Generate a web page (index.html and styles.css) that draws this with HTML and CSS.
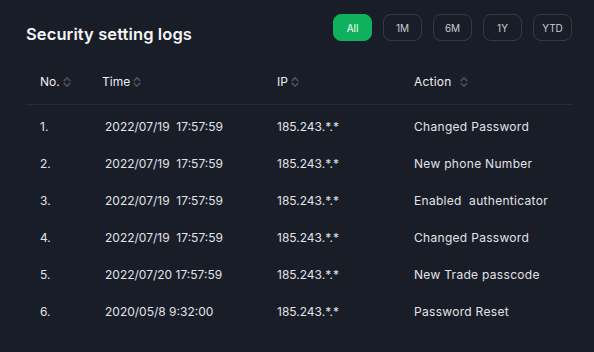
FILE: index.html
```html
<!DOCTYPE html>
<html>
<head>
<meta charset="utf-8">
<link rel="stylesheet" href="styles.css">
</head>
<body>
<div class="card">
  <div class="top">
    <h1 class="title">Security setting logs</h1>
    <div class="filters">
      <button class="chip active">All</button>
      <button class="chip">1M</button>
      <button class="chip">6M</button>
      <button class="chip">1Y</button>
      <button class="chip">YTD</button>
    </div>
  </div>
  <div class="table">
    <div class="row head">
      <div class="c1">No. <svg class="sort" viewBox="0 0 8 12"><path d="M1.2 4.6 4 1.8 6.8 4.6M1.2 7.4 4 10.2 6.8 7.4"/></svg></div>
      <div class="c2">Time <svg class="sort" viewBox="0 0 8 12"><path d="M1.2 4.6 4 1.8 6.8 4.6M1.2 7.4 4 10.2 6.8 7.4"/></svg></div>
      <div class="c3">IP <svg class="sort" viewBox="0 0 8 12"><path d="M1.2 4.6 4 1.8 6.8 4.6M1.2 7.4 4 10.2 6.8 7.4"/></svg></div>
      <div class="c4">Action <svg class="sort wide" viewBox="0 0 8 12"><path d="M1.2 4.6 4 1.8 6.8 4.6M1.2 7.4 4 10.2 6.8 7.4"/></svg></div>
    </div>
    <div class="row"><div class="c1">1.</div><div class="c2 t">2022/07/19&nbsp; 17:57:59</div><div class="c3">185.243.*.*</div><div class="c4">Changed Password</div></div>
    <div class="row"><div class="c1">2.</div><div class="c2 t">2022/07/19&nbsp; 17:57:59</div><div class="c3">185.243.*.*</div><div class="c4">New phone Number</div></div>
    <div class="row"><div class="c1">3.</div><div class="c2 t">2022/07/19&nbsp; 17:57:59</div><div class="c3">185.243.*.*</div><div class="c4">Enabled&nbsp; authenticator</div></div>
    <div class="row"><div class="c1">4.</div><div class="c2 t">2022/07/19&nbsp; 17:57:59</div><div class="c3">185.243.*.*</div><div class="c4">Changed Password</div></div>
    <div class="row"><div class="c1">5.</div><div class="c2 t">2022/07/20 17:57:59</div><div class="c3">185.243.*.*</div><div class="c4">New Trade passcode</div></div>
    <div class="row"><div class="c1">6.</div><div class="c2 t">2020/05/8 9:32:00</div><div class="c3">185.243.*.*</div><div class="c4">Password Reset</div></div>
  </div>
</div>
</body>
</html>
```
FILE: styles.css
```css
html, body {
  margin: 0;
  padding: 0;
  background: #191d27;
}
body {
  width: 594px;
  height: 352px;
  overflow: hidden;
  font-family: "Inter", "Noto Sans", sans-serif;
  color: #e6e8ec;
}
.card {
  padding: 14px 22px 0 26px;
}
.top {
  display: flex;
  justify-content: space-between;
  align-items: flex-start;
}
.title {
  margin: 10px 0 0 0;
  font-size: 16.5px;
  font-weight: 600;
  line-height: 20px;
  color: #f4f5f7;
  letter-spacing: 0.1px;
}
.filters {
  display: flex;
  gap: 11px;
}
.chip {
  width: 39px;
  height: 27px;
  border-radius: 8px;
  border: 1px solid #353a46;
  background: transparent;
  color: #c9ccd3;
  font-family: inherit;
  font-size: 10px;
  padding: 0;
  cursor: pointer;
}
.chip.active {
  background: #0fb15c;
  border-color: #0fb15c;
  color: #ffffff;
}
.table {
  margin-top: 26px;
}
.row {
  display: grid;
  grid-template-columns: 76px 175px 137px 1fr;
  height: 37px;
  align-items: center;
  font-size: 12px;
  color: #e1e3e8;
}
.row > div:first-child {
  padding-left: 14px;
}
.c4 {
  letter-spacing: 0.3px;
}
.row.head {
  height: 34px;
  border-bottom: 1px solid #252a35;
  margin-bottom: 3px;
  align-items: flex-start;
  font-size: 12px;
  color: #eceef2;
}
.row.head > div {
  display: flex;
  align-items: center;
  gap: 3px;
  line-height: 16px;
  padding-top: 4px;
}
.row.head .c4 {
  letter-spacing: 0.2px;
}
.t {
  padding-left: 3px;
}
.sort {
  width: 8px;
  height: 12px;
  fill: none;
  stroke: #4b505c;
  stroke-width: 1.6;
  stroke-linecap: round;
  stroke-linejoin: round;
}
.sort.wide {
  margin-left: 6px;
}
```
